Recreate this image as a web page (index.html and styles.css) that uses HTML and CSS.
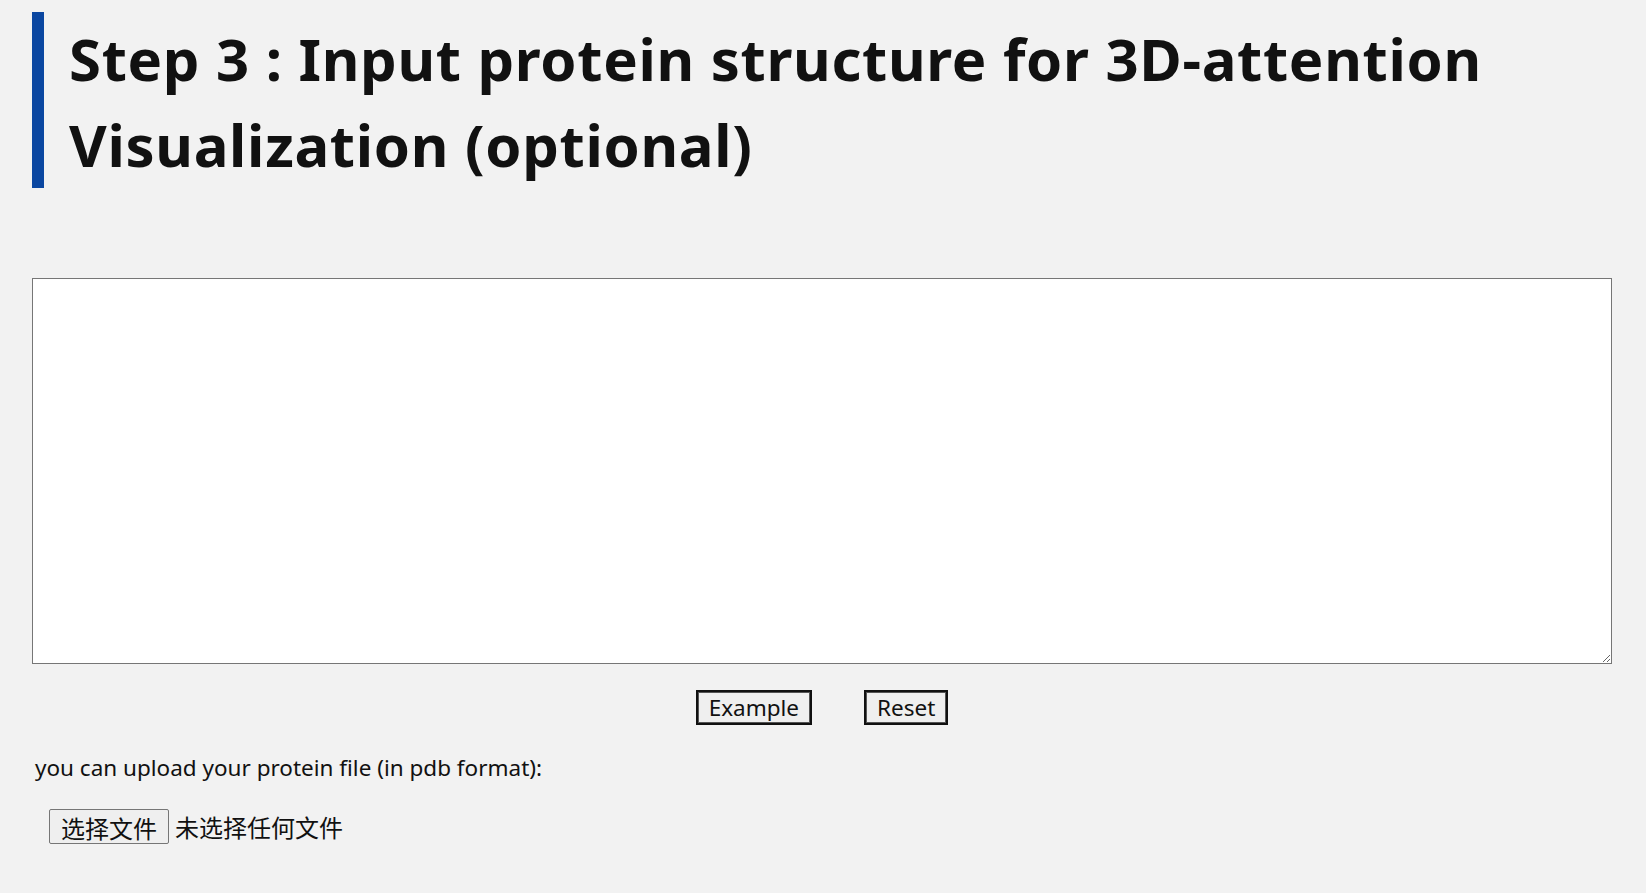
FILE: index.html
```html
<html>
  <head>
    <meta http-equiv="content-type" content="text/html; charset=UTF-8">
    <title>Step 3</title>
    <link rel="stylesheet" href="styles.css">
  </head>
  <body>
    <div class="step">
      <h2 class="step_title">Step 3 : Input protein structure for 3D-attention Visualization (optional)</h2>
      <form class="pdb_form" action="#" method="POST">
        <textarea class="pdb_text" name="pdb"></textarea>
        <div class="btns">
          <input class="btn" type="button" value="Example" />
          <input class="btn" type="reset" value="Reset" />
        </div>
        <p class="tip">you can upload your protein file (in pdb format):</p>
        <div class="upload">
          <button class="file_btn" type="button">选择文件</button><span class="file_name">未选择任何文件</span>
        </div>
      </form>
    </div>
  </body>
</html>
```

FILE: styles.css
```css
body { margin:0; background:#f2f2f2; font-family:"Noto Sans", "Noto Sans CJK SC", sans-serif; color:#111; }
.step { padding:12px 34px 40px 32px; }
.step_title { margin:0; padding:4px 0 0 25px; border-left:12px solid #0b47a1; font-family:"Noto Sans", Roboto, sans-serif; font-size:58px; line-height:86px; letter-spacing:0.7px; font-weight:bold; color:#111; }
.pdb_form { margin-top:90px; }
.pdb_text { display:block; box-sizing:border-box; width:100%; height:386px; margin:0; border:1px solid #767676; background:#fff; resize:both; }
.btns { display:flex; justify-content:center; gap:52px; margin-top:26px; }
.btn { height:35px; padding:0 11px; border:2px solid #111; box-shadow:inset 0 0 0 1px #555; background:#efefef; font-family:"Noto Sans", sans-serif; font-size:22.5px; color:#111; }
.tip { margin:27px 0 0 3px; font-size:22.5px; }
.upload { display:flex; align-items:center; margin:26px 0 0 17px; }
.file_btn { height:35px; padding:0 11px; border:1px solid #767676; border-radius:2px; background:#efefef; font-family:"Noto Sans CJK SC", sans-serif; font-size:24px; color:#111; }
.file_name { margin-left:6px; font-family:"Noto Sans CJK SC", sans-serif; font-size:24px; }
```
